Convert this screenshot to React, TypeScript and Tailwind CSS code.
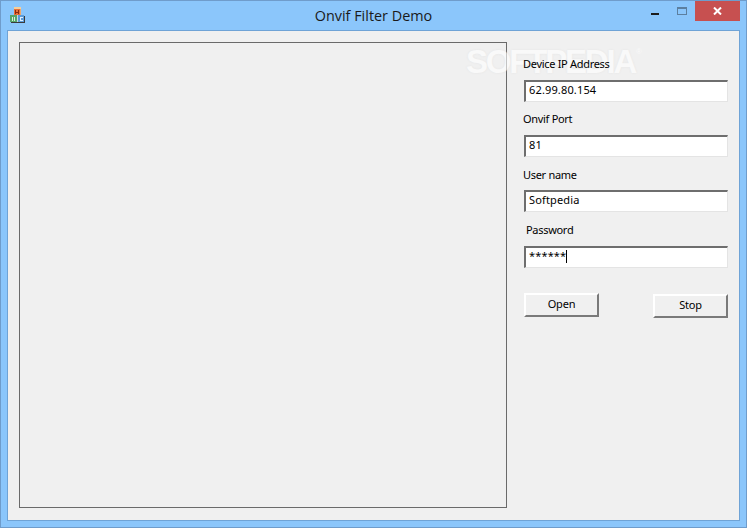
import React from 'react';

const font = { fontFamily: '"Noto Sans", sans-serif' };

const AppIcon = () => (
  <svg width="16" height="17" viewBox="0 0 16 17" shapeRendering="crispEdges">
    <rect x="4" y="1" width="7" height="2" fill="#f6cf9c" />
    <rect x="4" y="3" width="6" height="6" fill="#e8703a" />
    <rect x="10" y="3" width="1" height="6" fill="#f0a868" />
    <rect x="5" y="4" width="1" height="4" fill="#8a2a12" />
    <rect x="8" y="4" width="1" height="4" fill="#8a2a12" />
    <rect x="5" y="6" width="4" height="1" fill="#8a2a12" />
    <rect x="0" y="9" width="7" height="7" fill="#56a56a" />
    <rect x="2" y="11" width="1" height="4" fill="#d8f0d8" />
    <rect x="4" y="11" width="1" height="4" fill="#d8f0d8" />
    <rect x="7" y="9" width="1" height="7" fill="#c8d8e0" />
    <rect x="8" y="9" width="6" height="7" fill="#5b9bd8" />
    <rect x="10" y="11" width="3" height="1" fill="#e0f0ff" />
    <rect x="10" y="11" width="1" height="4" fill="#e0f0ff" />
    <rect x="10" y="14" width="3" height="1" fill="#e0f0ff" />
    <rect x="1" y="16" width="14" height="1" fill="#3a3a3a" />
    <rect x="14" y="10" width="1" height="7" fill="#3a3a3a" />
  </svg>
);

const Field = ({ value, caret }: { value: string; caret?: boolean }) => (
  <div className="w-[204px] h-[22px] ml-px bg-white border-t-2 border-l-2 border-r border-b border-t-[#6e6e6e] border-l-[#6e6e6e] border-r-[#e4e4e4] border-b-[#e4e4e4] pl-[3px] pb-[3px] flex items-center text-[11px] tracking-[0.15px] text-black">
    <span>{value}</span>
    {caret && <span className="w-px h-[13px] bg-black" />}
  </div>
);

const Button = ({ label }: { label: string }) => (
  <button className="w-[75px] h-[24px] pb-px bg-[#f0f0f0] border-t-2 border-l-2 border-r-2 border-b-2 border-t-white border-l-white border-r-[#7a7a7a] border-b-[#7a7a7a] text-[11px] tracking-[-0.2px] text-black flex items-center justify-center">
    {label}
  </button>
);

export default function App() {
  return (
    <div className="relative w-[747px] h-[528px] overflow-hidden bg-[#8bc6fb] border border-[#6f9ccb] flex flex-col" style={font}>
      {/* title bar */}
      <div className="h-[29px] flex items-start shrink-0">
        <div className="ml-[9px] mt-[5px]">
          <AppIcon />
        </div>
        <div className="flex-1 text-center text-[14.4px] leading-[29px] text-[#1a1a1a] pl-[70px]" style={{ fontFamily: '"Open Sans", sans-serif' }}>
          Onvif Filter Demo
        </div>
        <div className="flex items-start">
          <div className="w-[8px] h-[2px] bg-[#1c1c1c] mt-[12px] mr-[18px]" />
          <div className="w-[10px] h-[8px] mt-[6px] mr-[8px] border border-[#5c7f9f] border-t-2" />
          <div className="w-[45px] h-[20px] bg-[#c75050] mr-[6px] flex items-center justify-center">
            <svg width="9" height="8" viewBox="0 0 9 8">
              <path d="M1 0.5 L8 7.5 M8 0.5 L1 7.5" stroke="#fff" strokeWidth="2" fill="none" />
            </svg>
          </div>
        </div>
      </div>

      {/* client area */}
      <div className="ml-[6px] mr-[6px] h-[491px] bg-[#f0f0f0] border border-[#6fa3d6] flex pl-[11px] pt-[11px]">
        <div className="w-[488px] h-[466px] border border-[#6a6a6a] shrink-0" />

        <div className="relative z-10 ml-[16px] flex flex-col text-[11px] text-black">
          <div className="mt-[15px] h-[13px] leading-[13px] tracking-[-0.3px]">Device IP Address</div>
          <div className="mt-[10px]"><Field value="62.99.80.154" /></div>
          <div className="mt-[10px] h-[13px] leading-[13px] tracking-[-0.3px]">Onvif Port</div>
          <div className="mt-[10px]"><Field value="81" /></div>
          <div className="mt-[11px] h-[13px] leading-[13px] tracking-[-0.3px]">User name</div>
          <div className="mt-[9px]"><Field value="Softpedia" /></div>
          <div className="mt-[11px] h-[13px] leading-[13px] tracking-[-0.3px] pl-[3px]">Password</div>
          <div className="mt-[10px]"><Field value="******" caret /></div>
          <div className="mt-[25px] ml-px w-[204px] flex justify-between items-start">
            <Button label="Open" />
            <div className="mt-px"><Button label="Stop" /></div>
          </div>
        </div>
      </div>

      {/* watermark */}
      <div className="absolute left-[465px] top-[44px] flex items-start text-white opacity-60" style={{ fontFamily: '"Liberation Sans", sans-serif' }}>
        <span className="text-[33px] leading-none font-bold tracking-[-2.2px] [text-shadow:0_0_2px_#dddddd]">SOFTPEDIA</span>
        <span className="text-[8px] leading-none mt-[3px] ml-[1px]">®</span>
      </div>
    </div>
  );
}
